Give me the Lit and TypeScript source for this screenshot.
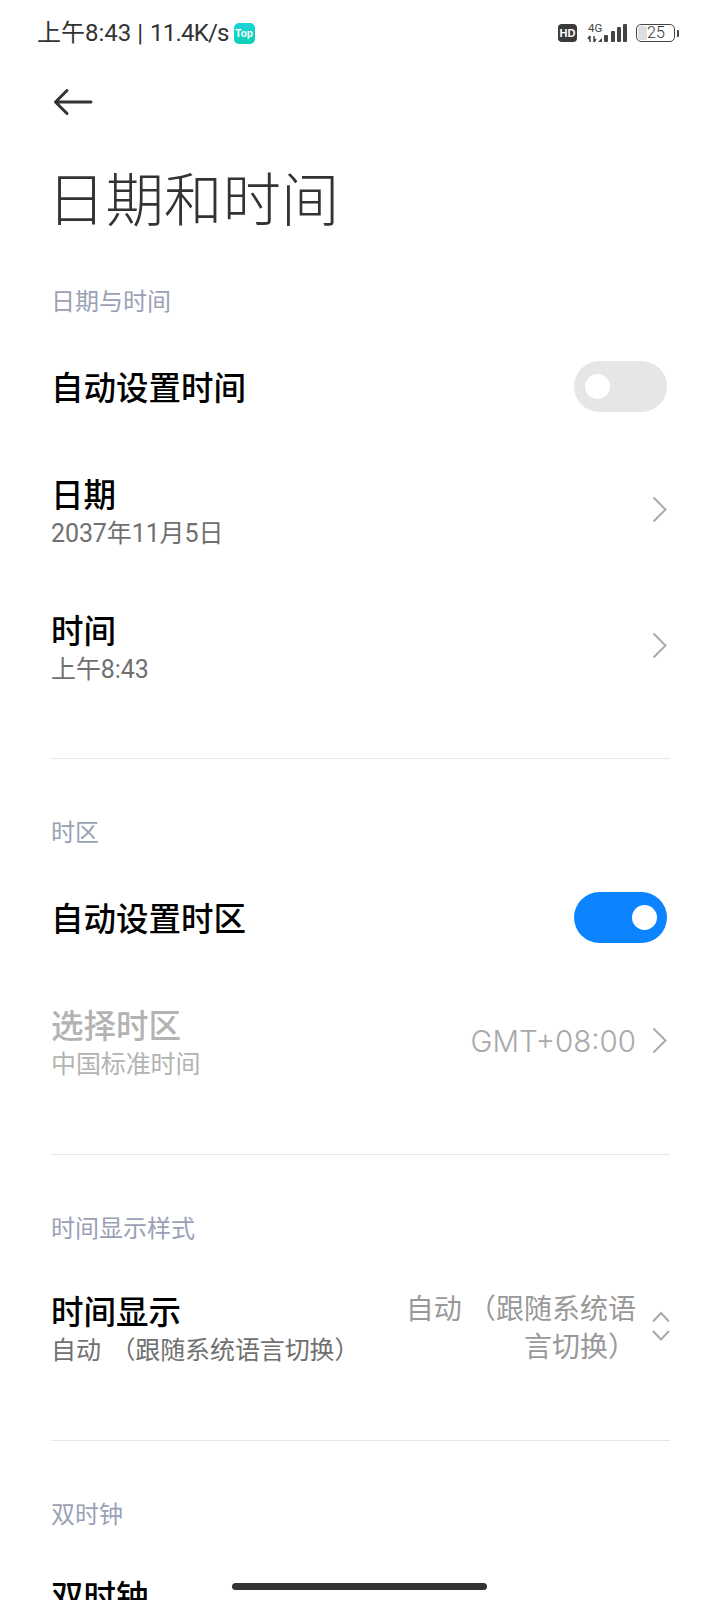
import { LitElement, html, css, svg } from 'lit'
import { customElement } from 'lit/decorators.js'

const chevron = html`<svg class="chev" width="15" height="27" viewBox="0 0 15 27">
    <path d="M1.5 1.5 L13.5 13.5 L1.5 25.5" fill="none" stroke="#aaaaaa" stroke-width="2"></path>
</svg>`

// x, top of each signal bar, all end at y=21
const signalBars = [
    [17, 14],
    [24, 10],
    [30, 6],
    [36, 3]
]

@customElement('app-root')
export class AppRoot extends LitElement {
    static styles = css`
        :host {
            display: block;
            position: relative;
            width: 720px;
            height: 1600px;
            overflow: hidden;
            background: #fff;
            font-family: 'Noto Sans CJK SC', 'Noto Sans', sans-serif;
            color: #000;
        }

        .status {
            height: 66px;
            padding: 0 41px 0 37px;
            display: flex;
            align-items: center;
            box-sizing: border-box;
        }

        .status-text {
            font-family: 'Roboto', 'Noto Sans CJK SC', sans-serif;
            font-size: 24px;
            line-height: 30px;
            color: #333;
            white-space: nowrap;
        }

        .speed {
            margin-left: 1px;
            letter-spacing: -0.8px;
        }

        .top-badge {
            width: 21px;
            height: 21px;
            margin-left: 5px;
            border-radius: 5px;
            background: linear-gradient(180deg, #1bd3d8, #0cd0b4);
            color: #fff;
            font-family: 'Liberation Sans', sans-serif;
            font-size: 10px;
            font-weight: 700;
            display: flex;
            align-items: center;
            justify-content: center;
        }

        .status-right {
            margin-left: auto;
            display: flex;
            align-items: center;
        }

        .hd {
            width: 19px;
            height: 18px;
            border-radius: 4px;
            background: #3a3a3a;
            color: #fff;
            font-family: 'Liberation Sans', sans-serif;
            font-size: 11px;
            font-weight: 700;
            display: flex;
            align-items: center;
            justify-content: center;
        }

        .net {
            margin-left: 10px;
            display: block;
        }

        .battery {
            margin-left: 9px;
            display: flex;
            align-items: center;
        }

        .battery-body {
            position: relative;
            width: 39px;
            height: 18px;
            box-sizing: border-box;
            border: 1.5px solid #444;
            border-radius: 5px;
            padding-left: 10px;
            font-family: 'Roboto', sans-serif;
            font-size: 16px;
            font-weight: 300;
            line-height: 15px;
            color: #333;
        }

        .battery-fill {
            position: absolute;
            left: 1px;
            top: 1px;
            bottom: 1px;
            background: #ddd;
            border-radius: 2px;
        }

        .battery-num {
            position: relative;
        }

        .battery-nub {
            width: 2px;
            height: 7px;
            margin-left: 2px;
            background: #444;
            border-radius: 0 1px 1px 0;
        }

        .back {
            height: 72px;
            padding-left: 53px;
            display: flex;
            align-items: center;
        }

        .title {
            margin: 20px 0 0;
            padding-left: 47px;
            font-size: 58.5px;
            font-weight: 300;
            line-height: 76px;
            color: #333;
        }

        .section {
            margin: 0 50px 0 51px;
            padding: 49px 0 42px;
        }

        .section + .section {
            padding-top: 55px;
            padding-bottom: 43px;
            border-top: 1px solid #e6e6e6;
        }

        .label {
            font-size: 24px;
            line-height: 34px;
            color: #9aa1b5;
            margin-bottom: 11px;
        }

        .row {
            display: flex;
            align-items: center;
            justify-content: space-between;
            padding: 29px 3px 29px 0;
        }

        .row.single {
            padding-top: 32.5px;
            padding-bottom: 32.5px;
        }

        .row.tall {
            padding-top: 35px;
            padding-bottom: 29px;
        }

        .row.last {
            padding-top: 34px;
        }

        .name {
            font-size: 32.5px;
            line-height: 40px;
            font-weight: 500;
            color: #000;
        }

        .sub {
            font-family: 'Roboto', 'Noto Sans CJK SC', sans-serif;
            font-size: 25px;
            line-height: 38px;
            padding-top: 2px;
            margin-bottom: -2px;
            color: #707070;
            white-space: nowrap;
            word-spacing: 3.5px;
            letter-spacing: -0.1px;
        }

        .disabled .name,
        .disabled .sub {
            color: #b3b3b3;
        }

        .trail {
            display: flex;
            align-items: center;
        }

        .row.tall .trail {
            align-self: flex-start;
            margin-top: -2px;
        }

        .chev {
            margin-left: 16px;
            margin-bottom: 5px;
            display: block;
        }

        .value {
            font-family: 'Inter', sans-serif;
            font-size: 29.5px;
            font-weight: 300;
            color: #a9a9a9;
            margin-bottom: 5px;
        }

        .select-value {
            width: 236px;
            font-size: 28px;
            line-height: 38px;
            color: #999;
            text-align: right;
        }

        .updown {
            margin: 0 -3px 0 16px;
            display: block;
        }

        .toggle {
            width: 93px;
            height: 51px;
            border-radius: 26px;
            background: #e6e6e6;
            display: flex;
            align-items: center;
            padding: 0 11px;
            box-sizing: border-box;
        }

        .toggle.on {
            background: #0d84ff;
            justify-content: flex-end;
            padding: 0 10px;
        }

        .toggle span {
            width: 25px;
            height: 25px;
            border-radius: 50%;
            background: #fff;
        }

        .home {
            position: absolute;
            left: 232px;
            top: 1583px;
            width: 255px;
            height: 7px;
            border-radius: 4px;
            background: #333;
        }
    `

    render() {
        return html`
            <div class="status">
                <div class="status-text">上午8:43 | <span class="speed">11.4K/s</span></div>
                <div class="top-badge">Top</div>
                <div class="status-right">
                    <div class="hd">HD</div>
                    <svg class="net" width="40" height="24" viewBox="0 0 40 24">
                        <text x="1" y="11" font-family="Roboto, sans-serif" font-size="11.500" fill="#444">4G</text>
                        <path d="M3 15 V21 M1 18 L3 15 M7 15 V21 M7 21 L9 18" stroke="#444" stroke-width="1.500" fill="none"></path>
                        <path d="M11 21 L15 17 V21 Z" fill="#444"></path>
                        ${signalBars.map(
                            ([x, top]) => svg`<rect x=${x} y=${top} width="4" height=${21 - top} rx="1" fill="#444"></rect>`
                        )}
                    </svg>
                    <div class="battery">
                        <div class="battery-body">
                            <div class="battery-fill" style="width: ${25 * 0.35}px"></div>
                            <span class="battery-num">25</span>
                        </div>
                        <div class="battery-nub"></div>
                    </div>
                </div>
            </div>

            <div class="back">
                <svg width="40" height="28" viewBox="0 0 40 28">
                    <path d="M38 14 H3 M14 2.500 L2.500 14 L14 25.500" fill="none" stroke="#333" stroke-width="3" stroke-linecap="round" stroke-linejoin="round"></path>
                </svg>
            </div>

            <h1 class="title">日期和时间</h1>

            <div class="section">
                <div class="label">日期与时间</div>
                <div class="row single">
                    <div class="name">自动设置时间</div>
                    <div class="toggle"><span></span></div>
                </div>
                <div class="row">
                    <div>
                        <div class="name">日期</div>
                        <div class="sub">2037年11月5日</div>
                    </div>
                    ${chevron}
                </div>
                <div class="row">
                    <div>
                        <div class="name">时间</div>
                        <div class="sub">上午8:43</div>
                    </div>
                    ${chevron}
                </div>
            </div>

            <div class="section">
                <div class="label">时区</div>
                <div class="row single">
                    <div class="name">自动设置时区</div>
                    <div class="toggle on"><span></span></div>
                </div>
                <div class="row disabled">
                    <div>
                        <div class="name">选择时区</div>
                        <div class="sub">中国标准时间</div>
                    </div>
                    <div class="trail">
                        <div class="value">GMT+08:00</div>
                        ${chevron}
                    </div>
                </div>
            </div>

            <div class="section">
                <div class="label">时间显示样式</div>
                <div class="row tall">
                    <div>
                        <div class="name">时间显示</div>
                        <div class="sub">自动 （跟随系统语言切换）</div>
                    </div>
                    <div class="trail">
                        <div class="select-value">自动 （跟随系统语言切换）</div>
                        <svg class="updown" width="18" height="30" viewBox="0 0 18 30">
                            <path d="M1 10.500 L9 2 L17 10.500 M1 20 L9 28.500 L17 20" fill="none" stroke="#aaaaaa" stroke-width="2"></path>
                        </svg>
                    </div>
                </div>
            </div>

            <div class="section">
                <div class="label">双时钟</div>
                <div class="row last">
                    <div class="name">双时钟</div>
                </div>
            </div>

            <div class="home"></div>
        `
    }
}
